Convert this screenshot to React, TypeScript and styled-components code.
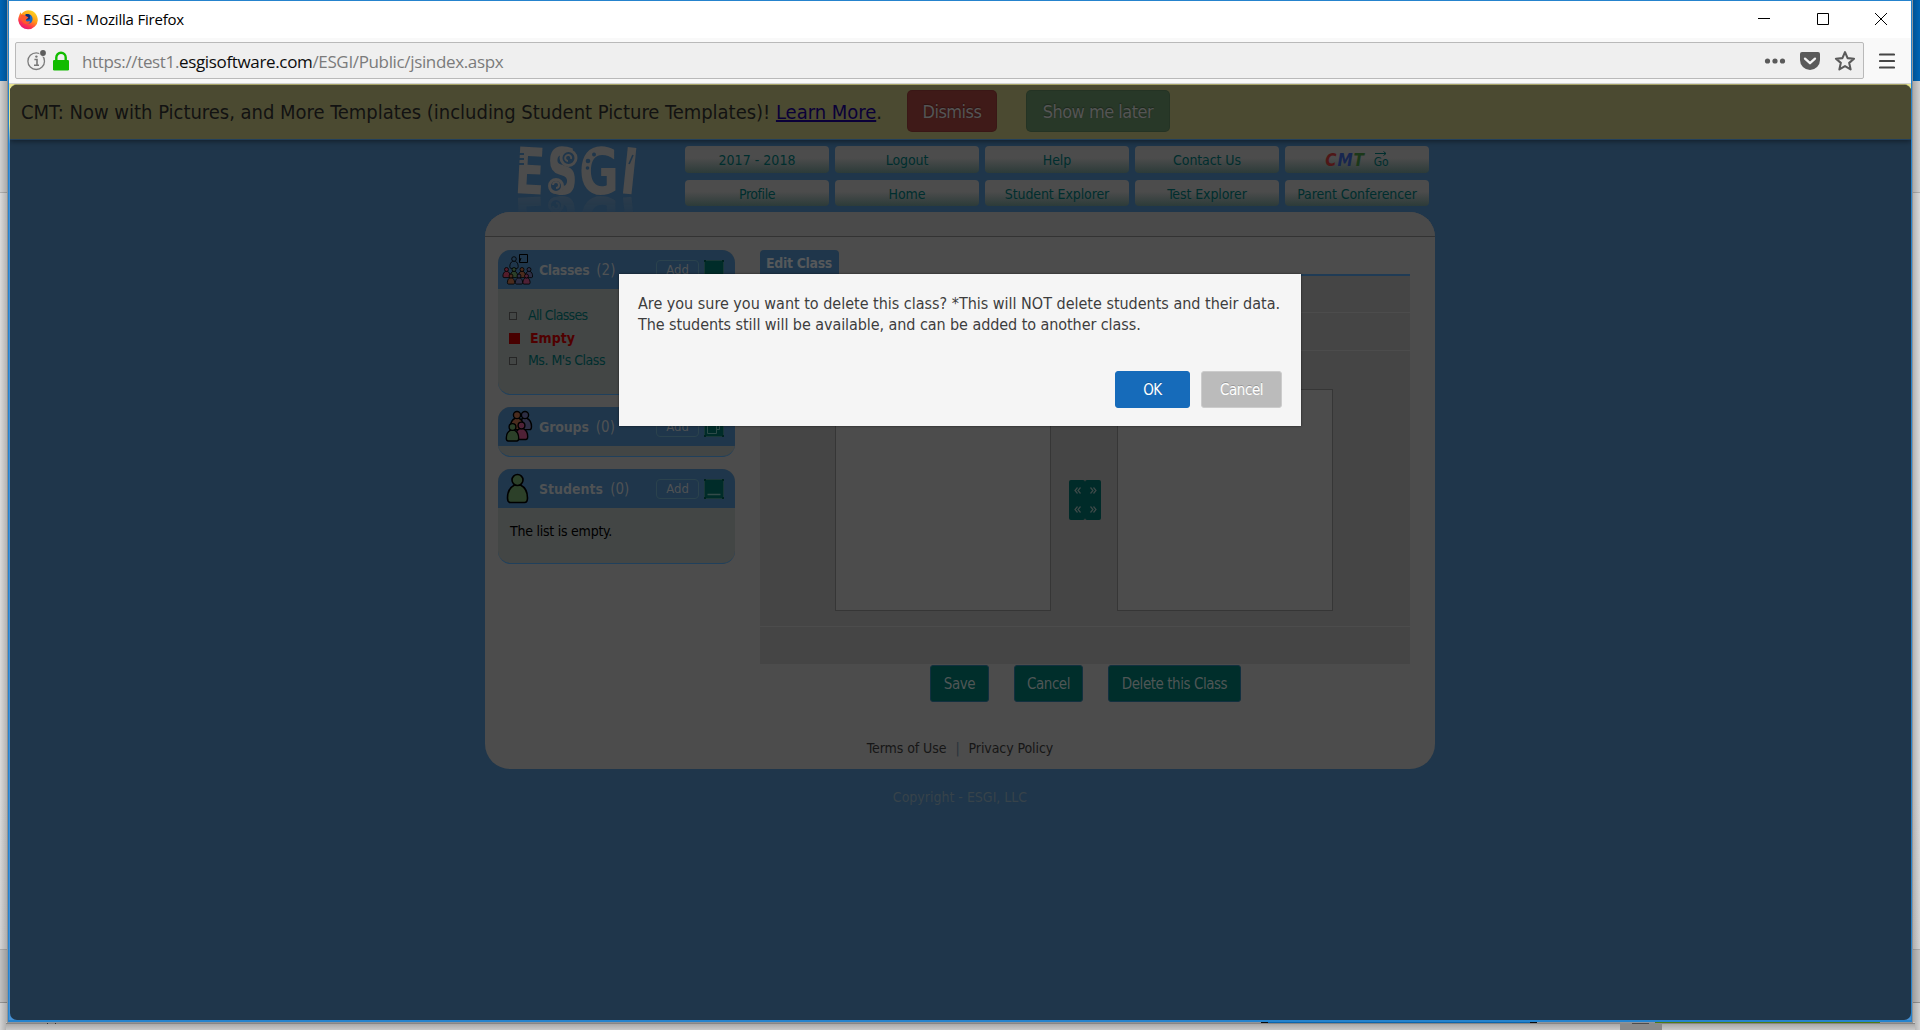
import React from 'react';
import styled, { createGlobalStyle } from 'styled-components';

const tahoma = '"DejaVu Sans Condensed", "DejaVu Sans", Tahoma, sans-serif';
const segoe = '"Open Sans", "Noto Sans", sans-serif';

/* Page colours, as they look under the modal shade */
const c = {
  page: '#1f364b',
  paper: '#4c4c4c',
  panel: '#454545',
  card: '#434645',
  link: '#002e2e',
  green: '#002e2b',
};

const Global = createGlobalStyle`
  * { box-sizing: border-box; }
  html, body { margin: 0; overflow: hidden; }
  body { font-family: ${tahoma}; font-stretch: condensed; }
  button { font: inherit; font-stretch: inherit; padding: 0; }
`;

/* ---------- desktop ---------- */
const Desktop = styled.div`
  position: relative;
  width: 1920px;
  height: 1030px;
  overflow: hidden;
  background: linear-gradient(#0067b9 0 81px, #d4d4d4 81px 192px, #b3b3b3 192px 193px, #dedede 193px 800px, #d8d8d8 949px, #b0b0b0 949px 950px, #c4c4c4 950px 1002px, #979797 1002px 1003px, #d6d6d6 1003px);
`;
const SideShadow = styled.div<{ $right?: boolean }>`
  position: absolute;
  top: 0;
  ${p => (p.$right ? 'left: 1912px' : 'left: 0')};
  width: 8px;
  height: 1030px;
  background: linear-gradient(to ${p => (p.$right ? 'left' : 'right')}, rgba(0, 0, 0, 0.02), rgba(0, 0, 0, 0.22));
`;
const BottomStrip = styled.div`
  position: absolute;
  left: 6px;
  right: 5px;
  top: 1022px;
  height: 8px;
  background: linear-gradient(#c8c8c8 0 1px, #868686 1px 2px, #a9a9a9 2px, #c9c9c9);
`;
const Peek = styled.div<{ $x: number; $w: number; $c: string; $y?: number; $h?: number }>`
  position: absolute;
  left: ${p => p.$x}px;
  width: ${p => p.$w}px;
  top: ${p => p.$y ?? 1022}px;
  height: ${p => p.$h ?? 1}px;
  background: ${p => p.$c};
`;

/* ---------- browser window ---------- */
const Window = styled.div`
  position: absolute;
  left: 8px;
  top: 0;
  width: 1904px;
  height: 1022px;
  display: flex;
  flex-direction: column;
  border: 2px solid #2583cd;
  border-width: 1px 1px 2px 1px;
  background: #fff;
  outline: 1px solid #8f9499;
`;
const TitleBar = styled.div`
  display: flex;
  align-items: center;
  height: 37px;
  padding: 0 24px 0 9px;
  font-family: ${segoe};
  font-stretch: normal;
  font-size: 15px;
  letter-spacing: -0.2px;
  color: #000;
`;
const TitleText = styled.span`
  flex: 1;
  padding: 0 0 2px 5px;
`;
const Controls = styled.div`
  display: flex;
  gap: 46px;
  height: 12px;
  margin-top: -1px;
`;
const ToolBar = styled.div`
  display: flex;
  align-items: center;
  height: 45px;
  padding: 0 16px 0 6px;
  background: #f9f9f9;
`;
const UrlBox = styled.div`
  display: flex;
  align-items: center;
  flex: 1;
  height: 37px;
  margin-right: 15px;
  padding: 0 8px 0 10px;
  border: 1px solid #b9b9b9;
  border-radius: 2px;
  background: #efefef;
  color: #7b7b7b;
  font-family: ${segoe};
  font-stretch: normal;
  font-size: 17px;
  letter-spacing: -0.35px;
`;
const UrlText = styled.span`
  flex: 1;
  margin-left: 12px;
  padding-top: 2px;
  line-height: 20px;
  white-space: nowrap;
  b { font-weight: 400; color: #0c0c0c; }
`;

/* ---------- page ---------- */
const Viewport = styled.div`
  flex: 1;
  min-height: 0;
  padding-left: 1px;
  border-top: 1px solid #d3d3d3;
  background: linear-gradient(#e9e58f 0 40px, #4590d4 60px);
`;
const Page = styled.div`
  height: 100%;
  border: 1px solid #a5a266;
  border-width: 1px 0 0 0;
  border-radius: 7px;
  overflow: hidden;
  background: ${c.page};
`;
const Banner = styled.div`
  display: flex;
  align-items: center;
  height: 55px;
  padding: 0 0 2px 11px;
  background: #4b4a31;
  box-shadow: 0 1px 6px rgba(0, 0, 0, 0.5);
  border-bottom: 1px solid #22405c;
  position: relative;
  color: #121212;
  font-size: 20px;
  white-space: pre;
  letter-spacing: -0.02px;
  span { padding-top: 1px; }
  a { color: #0a0038; text-decoration: underline; }
`;
const BannerButton = styled.button<{ $bg: string; $w: number; $gap: number }>`
  width: ${p => p.$w}px;
  height: 42px;
  margin-left: ${p => p.$gap}px;
  border: 1px solid rgba(0, 0, 0, 0.08);
  border-radius: 5px;
  background: ${p => p.$bg};
  color: #555;
  font-size: 18px;
  letter-spacing: -0.5px;
  text-shadow: 0 -1px 1px rgba(0, 0, 0, 0.3);
`;
const Site = styled.div`
  width: 950px;
  margin-left: 475px;
`;
const Header = styled.div`
  display: flex;
  height: 72px;
  padding: 6px 6px 0 0;
`;
const LogoBox = styled.div`
  width: 200px;
  padding: 1px 0 0 33px;
`;
const LogoSvg = styled.svg`
  display: block;
  overflow: visible;
  -webkit-box-reflect: below 1px linear-gradient(transparent 64%, rgba(0, 0, 0, 0.08) 65%, rgba(0, 0, 0, 0.28));
`;
const Nav = styled.div`
  display: grid;
  grid-template-columns: repeat(5, 144px);
  grid-template-rows: 27px 26px;
  gap: 7px 6px;
`;
const NavButton = styled.div<{ $ls?: number; $low?: boolean }>`
  display: flex;
  align-items: center;
  justify-content: center;
  gap: 9px;
  padding-top: ${p => (p.$low ? 2 : 0)}px;
  border-radius: 4px;
  background: linear-gradient(${c.paper} 45%, #2c3b39);
  color: ${c.link};
  font-size: 14px;
  letter-spacing: ${p => p.$ls ?? -0.1}px;
`;
const CmtWord = styled.span`
  font-style: italic;
  font-weight: 700;
  font-size: 17px;
  line-height: 18px;
  letter-spacing: 0.8px;
`;
const Tint = styled.span<{ $c: string }>`color: ${p => p.$c};`;
const Go = styled.span`
  display: flex;
  flex-direction: column;
  align-items: center;
  font-size: 12px;
  line-height: 12px;
  letter-spacing: 0;
  margin-top: -1px;
`;
const Paper = styled.div`
  height: 557px;
  border-radius: 25px;
  background: ${c.paper};
  overflow: hidden;
`;
const PaperTop = styled.div`
  height: 25px;
  background: #4a4a4a;
  border-bottom: 1px solid #333;
`;
const Columns = styled.div`
  display: flex;
  align-items: flex-start;
  gap: 25px;
  height: 465px;
  padding: 13px 0 0 13px;
`;
const Side = styled.div`
  width: 237px;
  display: flex;
  flex-direction: column;
  gap: 12px;
`;
const Card = styled.div<{ $h: number }>`
  height: ${p => p.$h}px;
  border-radius: 13px;
  border-bottom: 1px solid #20405c;
  background: ${c.card};
  overflow: hidden;
`;
const CardHead = styled.div`
  display: flex;
  align-items: center;
  height: 39px;
  padding: 0 11px 0 4px;
  background: ${c.page};
  color: #4f5254;
  font-size: 14px;
  svg { display: block; flex: none; }
`;
const CardTitle = styled.b<{ $ls: number }>`
  margin-left: 6px;
  letter-spacing: ${p => p.$ls}px;
`;
const Count = styled.span`
  flex: 1;
  margin-left: 7px;
  font-size: 15px;
`;
const AddButton = styled.span`
  width: 43px;
  height: 20px;
  margin-right: 5px;
  border: 1px solid #2b424d;
  border-radius: 4px;
  text-align: center;
  font-size: 13px;
  line-height: 18px;
`;
const ClassList = styled.ul`
  list-style: none;
  margin: 0;
  padding: 15px 0 0 12px;
  font-size: 14px;
  color: ${c.link};
`;
const ClassItem = styled.li<{ $on?: boolean; $ls: number }>`
  display: flex;
  align-items: center;
  height: 22.5px;
  letter-spacing: ${p => p.$ls}px;
  color: ${p => (p.$on ? '#500000' : c.link)};
  font-weight: ${p => (p.$on ? 700 : 400)};
  &::before {
    content: '';
    width: ${p => (p.$on ? 9 : 6)}px;
    height: ${p => (p.$on ? 9 : 6)}px;
    margin: 2px ${p => (p.$on ? 10 : 11)}px 0 -1px;
    border: 1px solid ${p => (p.$on ? '#480000' : '#262626')};
    background: ${p => (p.$on ? '#480000' : 'transparent')};
  }
`;
const EmptyNote = styled.div`
  padding: 15px 12px 0;
  color: #000;
  font-size: 14px;
  letter-spacing: -0.24px;
`;
const Main = styled.div`width: 650px;`;
const Tab = styled.div`
  width: 79px;
  height: 24px;
  padding-left: 6px;
  border-radius: 4px 4px 0 0;
  background: ${c.page};
  color: #55585a;
  font-size: 14px;
  font-weight: 700;
  line-height: 26px;
  letter-spacing: -0.34px;
`;
const Panel = styled.div`
  border-top: 2px solid #1f3b55;
  background: ${c.panel};
`;
const Band = styled.div<{ $h: number; $last?: boolean }>`
  height: ${p => p.$h}px;
  border-bottom: ${p => (p.$last ? 0 : 1)}px solid ${c.paper};
`;
const ListBand = styled(Band)`
  display: flex;
  padding: 38px 0 0 75px;
`;
const ListBox = styled.div`
  width: 216px;
  height: 222px;
  border: 1px solid #363636;
  background: ${c.paper};
`;
const Arrows = styled.div`
  display: grid;
  grid-template-columns: 16px 16px;
  margin: 91px 16px 0 18px;
  height: 40px;
`;
const ArrowColumn = styled.div`
  display: flex;
  flex-direction: column;
  align-items: center;
  padding: 7px 0;
  justify-content: space-between;
  border-radius: 2px;
  background: #002b29;
`;
const Actions = styled.div`
  display: flex;
  gap: 25px;
  padding: 1px 0 0 170px;
`;
const Action = styled.button<{ $w: number }>`
  width: ${p => p.$w}px;
  height: 37px;
  border: 1px solid #12303f;
  border-radius: 3px;
  background: ${c.green};
  color: #4f5656;
  font-size: 15px;
  letter-spacing: -0.45px;
`;
const Footer = styled.div`
  display: flex;
  justify-content: center;
  gap: 9px;
  padding-top: 38px;
  color: #161616;
  font-size: 14px;
  letter-spacing: -0.08px;
  i { font-style: normal; color: #2a333b; }
`;
const Copyright = styled.div`
  padding-top: 20px;
  text-align: center;
  color: #37434a;
  font-size: 14px;
`;

/* ---------- dialog ---------- */
const Dialog = styled.div`
  position: absolute;
  left: 619px;
  top: 274px;
  width: 682px;
  height: 152px;
  padding: 19px 19px 18px;
  display: flex;
  flex-direction: column;
  justify-content: space-between;
  background: #f5f5f5;
  box-shadow: 0 0 2px rgba(0, 0, 0, 0.6);
  color: #3d3d3d;
  font-size: 16px;
  line-height: 21px;
`;
const Message = styled.div`
  white-space: nowrap;
  letter-spacing: -0.01px;
  span { letter-spacing: -0.07px; }
`;
const DialogButtons = styled.div`
  display: flex;
  justify-content: flex-end;
  gap: 11px;
`;
const DialogButton = styled.button<{ $w: number; $bg: string; $edge: string }>`
  width: ${p => p.$w}px;
  height: 37px;
  padding-top: 2px;
  border: 1px solid ${p => p.$edge};
  border-radius: 3px;
  background: ${p => p.$bg};
  color: #fff;
  font-size: 15px;
  letter-spacing: -0.42px;
  text-shadow: 0 -1px 0 rgba(0, 0, 0, 0.2);
`;

/* ---------- drawings ---------- */
function FirefoxIcon() {
  return (
    <svg width="20" height="20" viewBox="0 0 20 20">
      <defs>
        <linearGradient id="fx" x1="0.9" y1="0" x2="0.3" y2="1">
          <stop offset="0" stopColor="#ffe226" />
          <stop offset="0.45" stopColor="#ff9a16" />
          <stop offset="0.75" stopColor="#ff3b47" />
          <stop offset="1" stopColor="#e3127f" />
        </linearGradient>
      </defs>
      <path d="M1.2 5.5C1.6 4 2 3 2.6 2.2L3.6 4.2C4.6 2.4 6.5 .8 10 .3C16 0 19.8 5 19.8 10.2A9.8 9.8 0 0 1 .3 10.8C.1 8.8.6 7 1.2 5.5Z" fill="url(#fx)" />
      <path d="M7.4 4.8C9 3.2 13 3.8 14.2 7C15.4 10.4 13.5 13.6 10.6 13.6C8.2 13.6 6.8 12.4 6.6 11L6.8 7Z" fill="#1569c7" />
      <path d="M7.5 4.4C9 3.5 11.5 4 12.4 5.5C11.4 7 12.4 8 11.6 9.2L8.2 10Z" fill="#0e2f74" />
      <path d="M2.5 5C5 4 7.4 5.2 8.8 6.6L10.4 7.2C9.8 9 7.6 9.1 7.8 10.6C9 12.2 11 10.8 12.2 11.4C11 14.5 7 14.6 5 12.4C3 10 2.4 7 2.5 5Z" fill="#ff5a2c" />
    </svg>
  );
}
function WindowControls() {
  return (
    <Controls>
      <svg width="13" height="12"><path d="M0 5.5H12" stroke="#000" /></svg>
      <svg width="12" height="12"><path d="M.5 .5H11.5V11.5H.5Z" stroke="#000" fill="none" /></svg>
      <svg width="12" height="12"><path d="M0 0L12 12M12 0L0 12" stroke="#000" fill="none" /></svg>
    </Controls>
  );
}
function SiteInfo() {
  return (
    <svg width="44" height="24" viewBox="0 0 44 24">
      <circle cx="10.2" cy="12.2" r="8.3" fill="none" stroke="#7c7c7c" strokeWidth="1.3" />
      <circle cx="17.2" cy="3.8" r="4" fill="#efefef" />
      <circle cx="17" cy="4" r="2.9" fill="#5c5c5c" />
      <path d="M8.4 10.5H11V16M8 16.2H13" stroke="#777" strokeWidth="1.6" fill="none" />
      <circle cx="10.4" cy="7.6" r="1.2" fill="#777" />
      <rect x="27" y="11" width="16" height="10.5" rx="1.2" fill="#12bc00" />
      <path d="M30.3 12V8.4A4.7 4.7 0 0 1 39.7 8.4V12" fill="none" stroke="#12bc00" strokeWidth="2.4" />
    </svg>
  );
}
function UrlActions() {
  return (
    <svg width="92" height="24" viewBox="0 0 92 24">
      <g fill="#5a5a5a">
        <circle cx="4.5" cy="12" r="2.6" /><circle cx="12" cy="12" r="2.6" /><circle cx="19.5" cy="12" r="2.6" />
        <path d="M39 3H55Q57 3 57 5V11A10 10 0 0 1 37 11V5Q37 3 39 3Z" />
      </g>
      <path d="M42 9.6L47 14.2L52 9.6" fill="none" stroke="#f4f4f4" strokeWidth="2.3" strokeLinecap="round" strokeLinejoin="round" />
      <path d="M82 3.2L84.6 9.1L91 9.7L86.2 13.9L87.6 20.4L82 17.1L76.4 20.4L77.8 13.9L73 9.7L79.4 9.1Z" fill="none" stroke="#5a5a5a" strokeWidth="2.1" strokeLinejoin="round" />
    </svg>
  );
}
function MenuIcon() {
  return (
    <svg width="16" height="16"><path d="M1 1.5H15M1 8H15M1 14.5H15" stroke="#454545" strokeWidth="2.1" strokeLinecap="round" /></svg>
  );
}
function Logo() {
  return (
    <LogoSvg width="130" height="48" viewBox="0 0 130 48">
      <g fill={c.paper} fontFamily='"DejaVu Sans Condensed","DejaVu Sans"' fontWeight="700" fontSize="64">
        <text x="-3" y="47" textLength="30" lengthAdjust="spacingAndGlyphs" transform="rotate(3 14 24)">E</text>
        <text x="29" y="47" textLength="31" lengthAdjust="spacingAndGlyphs">S</text>
        <text x="61" y="47" textLength="40" lengthAdjust="spacingAndGlyphs">G</text>
        <text x="103" y="47" textLength="17" lengthAdjust="spacingAndGlyphs" transform="rotate(6 112 24)">I</text>
      </g>
      <g fill={c.page}>
        <path d="M-1 6H6V8H-1ZM-1 11H6V13H-1ZM-1 16H6V18H-1Z" />
        <circle cx="70" cy="14" r="2.3" /><circle cx="76" cy="7.5" r="2" /><circle cx="69.5" cy="21" r="1.8" />
      </g>
      <path d="M111 17L115 8" stroke={c.page} strokeWidth="1.6" />
      <g fill={c.page} stroke={c.paper} strokeWidth="3">
        <circle cx="50.5" cy="11" r="7.5" /><circle cx="38" cy="39" r="6.5" />
      </g>
      <g fill="none" stroke={c.paper} strokeWidth="2">
        <path d="M53 12A3 3 0 1 0 50 14" /><path d="M35 38A3 3 0 1 1 38 41" />
      </g>
    </LogoSvg>
  );
}

const hues = { orange: '#4b2c1e', blue: '#2d2e44', green: '#2c4029', pink: '#4f2136', red: '#531d2b', none: c.page };

function Person({ x, y, k, fill, line = 1.4 }: { x: number; y: number; k: number; fill: string; line?: number }) {
  return (
    <g transform={`translate(${x} ${y}) scale(${k})`} fill={fill} stroke="#000" strokeWidth={line / k}>
      <path d="M-3 5C-7 7-10 12-10 18Q-10 22.5-7 22.5H7Q10 22.5 10 18C10 12 7 7 3 5Z" />
      <circle r="5.5" />
    </g>
  );
}
function ClassesIcon() {
  return (
    <svg width="31" height="39" viewBox="0 0 31 39">
      <path d="M17.5 4.5H25.5V12.5H17.5ZM17.5 12L19 8" fill="none" stroke="#000" />
      <Person x={12} y={9} k={0.42} fill={hues.none} line={0.8} />
      <Person x={4.5} y={19.5} k={0.36} fill={hues.red} line={0.8} />
      <Person x={12} y={19.5} k={0.36} fill={hues.green} line={0.8} />
      <Person x={20} y={19.5} k={0.36} fill={hues.orange} line={0.8} />
      <Person x={27} y={19.5} k={0.36} fill={hues.blue} line={0.8} />
      <Person x={9} y={26} k={0.36} fill={hues.orange} line={0.8} />
      <Person x={17} y={26} k={0.36} fill={hues.blue} line={0.8} />
      <Person x={24.5} y={26} k={0.36} fill={hues.pink} line={0.8} />
    </svg>
  );
}
function GroupsIcon() {
  return (
    <svg width="31" height="39" viewBox="0 0 31 39">
      <Person x={23} y={8} k={0.65} fill={hues.blue} />
      <Person x={15} y={8} k={0.65} fill={hues.orange} />
      <Person x={19.5} y={18.5} k={0.62} fill={hues.pink} />
      <Person x={10.5} y={20} k={0.62} fill={hues.green} />
    </svg>
  );
}
function StudentIcon() {
  return (
    <svg width="31" height="39" viewBox="0 0 31 39"><Person x={15.5} y={11} k={1} fill={hues.green} line={1.6} /></svg>
  );
}
function CollapseIcon({ windows }: { windows?: boolean }) {
  return (
    <svg width="20" height="20" viewBox="0 0 20 20">
      <rect x="0.5" y="0.5" width="19" height="19" fill="#002c29" stroke="#1a3837" />
      <path d="M0 0H2V2H0ZM18 0H20V2H18ZM0 18H2V20H0ZM18 18H20V20H18Z" fill="#00231f" />
      {windows
        ? <path d="M7.5 4.5H15.5V12.5H12.5M3.5 7.5H12.5V16.5H3.5Z" fill="none" stroke="#2d4a48" />
        : <path d="M3.5 15.5H16.5" stroke="#344b4a" strokeWidth="1.6" />}
    </svg>
  );
}
function Chevrons({ right }: { right?: boolean }) {
  return (
    <svg width="7" height="7" viewBox="0 0 7 7">
      <path d={right ? 'M.5 .5L3 3.5L.5 6.5M3.5 .5L6 3.5L3.5 6.5' : 'M3.5 .5L1 3.5L3.5 6.5M6.5 .5L4 3.5L6.5 6.5'} fill="none" stroke="#3d4a49" strokeWidth="1.2" />
    </svg>
  );
}

type HeadProps = { icon: React.ReactNode; title: string; count: number; ls: number; windows?: boolean };
function Head({ icon, title, count, ls, windows }: HeadProps) {
  return (
    <CardHead>
      {icon}
      <CardTitle $ls={ls}>{title}</CardTitle>
      <Count>({count})</Count>
      <AddButton>Add</AddButton>
      <CollapseIcon windows={windows} />
    </CardHead>
  );
}

export default function App() {
  return (
    <Desktop>
      <Global />
      <SideShadow />
      <SideShadow $right />
      <BottomStrip />
      <Peek $x={1620} $w={42} $y={1023} $h={7} $c="#8a8a8a" />
      <Peek $x={1632} $w={17} $y={1023} $c="#4c4c4c" />
      <Peek $x={47} $w={1} $y={1023} $c="#333" />
      <Peek $x={55} $w={1} $y={1023} $c="#333" />
      <Window>
        <TitleBar>
          <FirefoxIcon />
          <TitleText>ESGI - Mozilla Firefox</TitleText>
          <WindowControls />
        </TitleBar>
        <ToolBar>
          <UrlBox>
            <SiteInfo />
            <UrlText>https://test1.<b>esgisoftware.com</b>/ESGI/Public/jsindex.aspx</UrlText>
            <UrlActions />
          </UrlBox>
          <MenuIcon />
        </ToolBar>
        <Viewport>
          <Page>
            <Banner>
              <span>CMT: Now with Pictures, and More Templates (including Student Picture Templates)! <a>Learn More</a>.</span>
              <BannerButton $bg="#3f1a18" $w={90} $gap={25}>Dismiss</BannerButton>
              <BannerButton $bg="#283828" $w={144} $gap={29}>Show me later</BannerButton>
            </Banner>
            <Site>
              <Header>
                <LogoBox><Logo /></LogoBox>
                <Nav>
                  <NavButton $ls={0.03}>2017 - 2018</NavButton>
                  <NavButton>Logout</NavButton>
                  <NavButton>Help</NavButton>
                  <NavButton>Contact Us</NavButton>
                  <NavButton>
                    <CmtWord><Tint $c="#4f1717">C</Tint><Tint $c="#17264f">M</Tint><Tint $c="#1b3819">T</Tint></CmtWord>
                    <Go>
                      <svg width="12" height="5"><path d="M0 2.5H11M8.5 .5L11 2.5L8.5 4.5" fill="none" stroke={c.link} /></svg>
                      Go
                    </Go>
                  </NavButton>
                  <NavButton $low $ls={-0.44}>Profile</NavButton>
                  <NavButton $low>Home</NavButton>
                  <NavButton $low>Student Explorer</NavButton>
                  <NavButton $low>Test Explorer</NavButton>
                  <NavButton $low>Parent Conferencer</NavButton>
                </Nav>
              </Header>
              <Paper>
                <PaperTop />
                <Columns>
                  <Side>
                    <Card $h={145}>
                      <Head icon={<ClassesIcon />} title="Classes" count={2} ls={-0.4} />
                      <ClassList>
                        <ClassItem $ls={-0.7}>All Classes</ClassItem>
                        <ClassItem $ls={0} $on>Empty</ClassItem>
                        <ClassItem $ls={-0.5}>Ms. M's Class</ClassItem>
                      </ClassList>
                    </Card>
                    <Card $h={50}>
                      <Head icon={<GroupsIcon />} title="Groups" count={0} ls={-0.15} windows />
                    </Card>
                    <Card $h={95}>
                      <Head icon={<StudentIcon />} title="Students" count={0} ls={0} />
                      <EmptyNote>The list is empty.</EmptyNote>
                    </Card>
                  </Side>
                  <Main>
                    <Tab>Edit Class</Tab>
                    <Panel>
                      <Band $h={37} />
                      <Band $h={38} />
                      <ListBand $h={276}>
                        <ListBox />
                        <Arrows>
                          <ArrowColumn><Chevrons /><Chevrons /></ArrowColumn>
                          <ArrowColumn><Chevrons right /><Chevrons right /></ArrowColumn>
                        </Arrows>
                        <ListBox />
                      </ListBand>
                      <Band $h={37} $last />
                    </Panel>
                    <Actions>
                      <Action $w={59}>Save</Action>
                      <Action $w={69}>Cancel</Action>
                      <Action $w={133}>Delete this Class</Action>
                    </Actions>
                  </Main>
                </Columns>
                <Footer><span>Terms of Use</span><i>|</i><span>Privacy Policy</span></Footer>
              </Paper>
              <Copyright>Copyright - ESGI, LLC</Copyright>
            </Site>
          </Page>
        </Viewport>
      </Window>
      <Peek $x={1261} $w={7} $c="#0a0a0a" />
      <Peek $x={1268} $w={262} $c="#0b66ad" />
      <Peek $x={1530} $w={7} $c="#0a0a0a" />
      <Peek $x={1655} $w={225} $c="#4f7d10" />
      <Dialog>
        <Message>
          Are you sure you want to delete this class? *This will NOT delete students and their data.<br />
          <span>The students still will be available, and can be added to another class.</span>
        </Message>
        <DialogButtons>
          <DialogButton $w={75} $bg="#166bba" $edge="#166bba">OK</DialogButton>
          <DialogButton $w={81} $bg="#bbb" $edge="#ccc">Cancel</DialogButton>
        </DialogButtons>
      </Dialog>
    </Desktop>
  );
}
